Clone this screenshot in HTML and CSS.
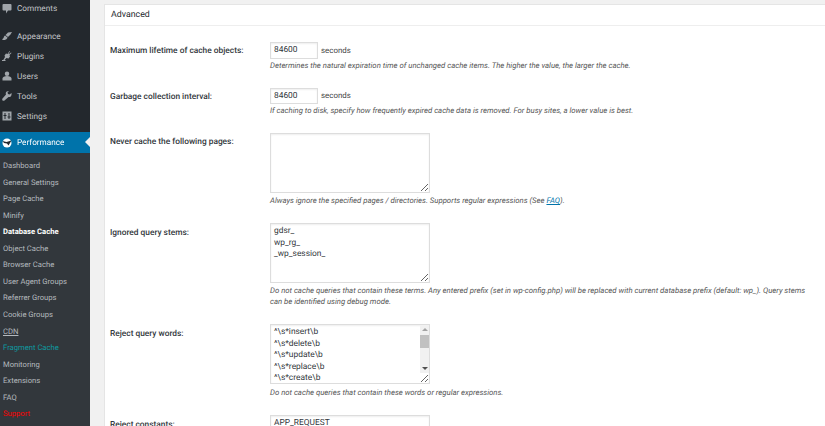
FILE: index.html
```html
<!DOCTYPE html>
<html lang="en">
<head>
<meta charset="utf-8">
<title>Database Cache</title>
<link rel="stylesheet" href="styles.css">
</head>
<body>
<aside class="sidebar">
  <nav class="menu">
    <a class="item first"><svg class="ico" viewBox="0 0 20 20"><path d="M3 0h14q2 0 2 2v9q0 2-2 2h-5l-4 6v-6H3q-2 0-2-2V2q0-2 2-2z"/></svg>Comments</a>
    <a class="item gap"><svg class="ico" viewBox="0 0 20 20"><path d="M20 2 12 3 7 8l5 4 5-5zM6 9c-2 1-2 3-3 5l-3 3c4 2 8 1 10-2 1-1 1-2 1-2z"/></svg>Appearance</a>
    <a class="item"><svg class="ico" viewBox="0 0 20 20"><path d="M15 0l-4 6-3-1-3 4 1 3-4 7h2l5-5 4 1 3-4-1-3 4-4-1-1-4 3-1-1 3-4z"/><path d="M0 18h7v2H0z"/></svg>Plugins</a>
    <a class="item"><svg class="ico" viewBox="0 0 20 20"><circle cx="10" cy="5.5" r="4.5"/><path d="M1 19v-4c0-3 4-5 9-5s9 2 9 5v4z"/></svg>Users</a>
    <a class="item"><svg class="ico" viewBox="0 0 20 20"><path d="M19 4l-4 3-3-1-1-3 3-3c-4 0-8 2-6 7L1 15c-2 3 1 6 4 4l8-7c4 1 7-3 6-8z"/></svg>Tools</a>
    <a class="item"><svg class="ico" viewBox="0 0 20 20"><path fill-rule="evenodd" d="M1 1h18v18H1zM5 4v4H3v2h2v6h2v-6h2V8H7V4zm8 0v7h-2v2h2v3h2v-3h2v-2h-2V4z"/></svg>Settings</a>
    <a class="item current gap"><svg class="ico" viewBox="0 0 20 20"><path fill="#fff" d="M10 1a9 9 0 1 0 0 18 9 9 0 0 0 0-18z"/><path fill="#23282d" d="M1 6l8 2 10-3-6 10-3-4-6-1z"/></svg>Performance</a>
    <div class="sub">
      <a class="subitem">Dashboard</a>
      <a class="subitem">General Settings</a>
      <a class="subitem">Page Cache</a>
      <a class="subitem">Minify</a>
      <a class="subitem active">Database Cache</a>
      <a class="subitem">Object Cache</a>
      <a class="subitem">Browser Cache</a>
      <a class="subitem">User Agent Groups</a>
      <a class="subitem">Referrer Groups</a>
      <a class="subitem">Cookie Groups</a>
      <a class="subitem cdn">CDN</a>
      <a class="subitem fragment">Fragment Cache</a>
      <a class="subitem">Monitoring</a>
      <a class="subitem">Extensions</a>
      <a class="subitem">FAQ</a>
      <a class="subitem support">Support</a>
    </div>
  </nav>
</aside>
<main class="content">
  <section class="panel">
    <h2 class="panel-title">Advanced</h2>
    <div class="rows">
      <div class="row row-a">
        <label class="label">Maximum lifetime of cache objects:</label>
        <div class="field">
          <div class="inline"><input class="num" type="text" value="84600"><span class="unit">seconds</span></div>
          <p class="desc">Determines the natural expiration time of unchanged cache items. The higher the value, the larger the cache.</p>
        </div>
      </div>
      <div class="row row-b">
        <label class="label">Garbage collection interval:</label>
        <div class="field">
          <div class="inline"><input class="num" type="text" value="84600"><span class="unit">seconds</span></div>
          <p class="desc">If caching to disk, specify how frequently expired cache data is removed. For busy sites, a lower value is best.</p>
        </div>
      </div>
      <div class="row row-c">
        <label class="label">Never cache the following pages:</label>
        <div class="field">
          <textarea class="area"></textarea>
          <p class="desc">Always ignore the specified pages / directories. Supports regular expressions (See <a class="link">FAQ</a>).</p>
        </div>
      </div>
      <div class="row row-d">
        <label class="label">Ignored query stems:</label>
        <div class="field">
          <textarea class="area">gdsr_
wp_rg_
_wp_session_</textarea>
          <p class="desc">Do not cache queries that contain these terms. Any entered prefix (set in wp-config.php) will be replaced with current database prefix (default: wp_). Query stems can be identified using debug mode.</p>
        </div>
      </div>
      <div class="row row-e">
        <label class="label">Reject query words:</label>
        <div class="field">
          <div class="scrollwrap">
            <textarea class="area scroll">^\s*insert\b
^\s*delete\b
^\s*update\b
^\s*replace\b
^\s*create\b
^\s*alter\b
^\s*show\b
^\s*set\b
\bautoload\s+=\s+'yes'\b
\bsql_calc_found_rows\b
\bfound_rows\(\)
\bw3tc_request_data\b
^\s*drop\b
^\s*truncate\b</textarea>
            <div class="fakebar" aria-hidden="true">
              <span class="arrow up"></span>
              <span class="thumb"></span>
              <span class="arrow down"></span>
            </div>
          </div>
          <p class="desc">Do not cache queries that contain these words or regular expressions.</p>
        </div>
      </div>
      <div class="row row-f">
        <label class="label">Reject constants:</label>
        <div class="field">
          <textarea class="area">APP_REQUEST</textarea>
        </div>
      </div>
    </div>
  </section>
</main>
</body>
</html>
```
FILE: styles.css
```css
* { box-sizing: border-box; }
html, body { margin: 0; height: 426px; overflow: hidden; }
body {
  display: flex;
  background: #f1f1f1;
  font-family: Roboto, "Open Sans", sans-serif;
  font-size: 8.4px;
  color: #444;
  filter: blur(.25px);
  text-rendering: geometricPrecision;
}
.area, .num { text-rendering: geometricPrecision; }
.sidebar { width: 90px; flex: none; background: #23282d; height: 426px; overflow: hidden; }
.menu { display: flex; flex-direction: column; }
.item {
  display: flex; align-items: center; height: 20.1px;
  padding: 1px 0 0 2px; color: #c3c6c9; font-size: 8.2px; line-height: 20px;
}
.item.first { height: 17px; }
.item.gap { margin-top: 9px; }
.ico { width: 10px; height: 10px; margin: -1px 5px 0 0; fill: #a0a5aa; flex: none; }
.item.current { background: #0073aa; color: #fff; position: relative; margin-top: 6px; padding-top: 0; }
.item.current .ico { margin-top: 0; }
.item.current::after {
  content: ""; position: absolute; right: 0; top: 5px;
  border: 5px solid transparent; border-right-color: #f1f1f1; border-left: 0;
}
.sub { background: #32373c; padding-top: 5.5px; display: flex; flex-direction: column; height: 300px; }
.subitem { height: 16.55px; line-height: 16.55px; padding-left: 3px; color: #b4b9be; font-size: 7.65px; white-space: nowrap; }
.subitem.active { color: #fff; font-weight: 700; }
.subitem.cdn { text-decoration: underline; }
.subitem.fragment { color: #0e9aa0; }
.subitem.support { color: #f00; }

.content { flex: 1; padding: 4px 0 0 14px; min-width: 0; }
.panel { background: #fff; border: 1px solid #e5e5e5; border-right: 0; height: 430px; overflow: hidden; }
.panel-title {
  margin: 0; height: 21px; line-height: 20px; padding-left: 6px;
  font-size: 8.8px; font-weight: 400; color: #23282d; border-bottom: 1px solid #eee;
}
.rows { padding-left: 5px; display: flex; flex-direction: column; }
.row { display: flex; }
.label { width: 160px; flex: none; font-size: 8.35px; font-weight: 500; color: #32373c; padding-top: 4px; }
.field { width: 536px; }
.inline { display: flex; align-items: center; gap: 3px; }
.unit { font-size: 7.9px; }
.num {
  width: 48px; height: 16.5px; padding: 0 3px; font: inherit; color: #32373c;
  background: #fff; border: 1px solid #ddd; box-shadow: inset 0 1px 2px rgba(0,0,0,.07); border-radius: 0; outline: 0;
}
.desc { margin: 0; font-style: italic; font-size: 7.75px; line-height: 11px; color: #555; }
.area {
  display: block; width: 160px; height: 60px; padding: 2px 3px; font: inherit; line-height: 11.6px;
  color: #32373c; background: #fff; border: 1px solid #ddd; border-radius: 0;
  box-shadow: inset 0 1px 2px rgba(0,0,0,.07); outline: 0; resize: both;
}
.link { color: #0073aa; text-decoration: underline; }
.row-a { margin-top: 16px; }
.row-a .desc { margin-top: 1px; }
.row-b { margin-top: 17px; }
.row-b .desc { margin-top: 1px; }
.row-c { margin-top: 17px; }
.row-c .desc { margin-top: 2px; }
.row-d { margin-top: 17px; }
.row-d .desc { margin-top: 2px; }
.row-d .label { padding-top: 5px; }
.row-e { margin-top: 17px; }
.row-e .label { padding-top: 5px; }
.row-e .desc { margin-top: 3px; }
.row-f { margin-top: 17px; }
.row-f .label { padding-top: 5px; }
.scrollwrap { position: relative; width: 160px; }
.scroll { overflow: hidden; }
.fakebar {
  position: absolute; top: 1px; right: 1px; width: 9px; height: 48px; background: #f1f1f1;
  display: flex; flex-direction: column; align-items: center;
}
.thumb { display: block; width: 9px; height: 13px; background: #c1c1c1; margin: 0 0 auto; }
.arrow { display: block; width: 0; height: 0; border: 3px solid transparent; }
.arrow.up { border-top: 0; border-bottom-color: #a3a3a3; margin: 3px 0 4px; }
.arrow.down { border-bottom: 0; border-top-color: #505050; margin: 0 0 3px; }
```
